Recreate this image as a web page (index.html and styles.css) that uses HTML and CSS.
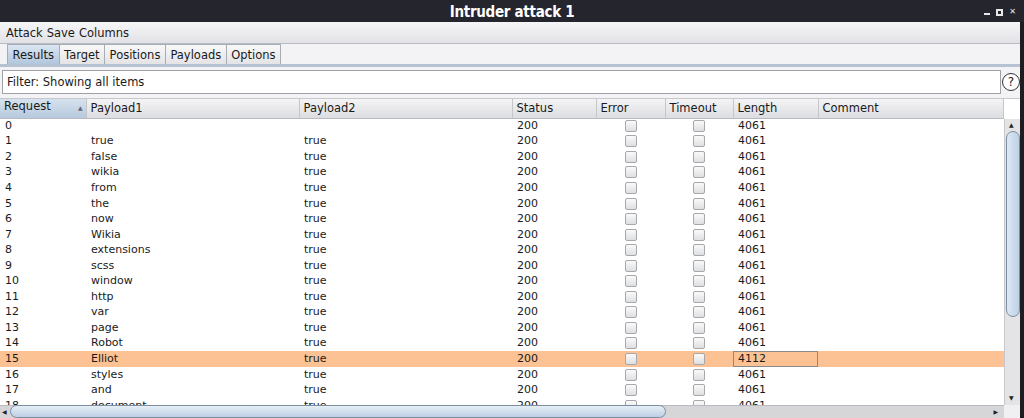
FILE: index.html
```html
<!DOCTYPE html>
<html lang="en">
<head>
    <meta charset="UTF-8">
    <title>Intruder attack 1</title>
    <link rel="stylesheet" href="styles.css">
</head>
<body>
    <div class="titlebar">
        <span class="title">Intruder attack 1</span>
        <div class="wincontrols">
            <span class="wc-min"></span>
            <span class="wc-max"></span>
            <span class="wc-close">&#x2715;</span>
        </div>
    </div>

    <div class="window">
        <div class="menubar">
            <span>Attack</span><span>Save</span><span>Columns</span>
        </div>

        <div class="tabs">
            <div class="tab active">Results</div>
            <div class="tab">Target</div>
            <div class="tab">Positions</div>
            <div class="tab">Payloads</div>
            <div class="tab">Options</div>
        </div>

        <div class="filter-row">
            <div class="filter">Filter: Showing all items</div>
            <div class="help">?</div>
        </div>

        <div class="results">
            <div class="table-area">
                <table class="grid">
                    <colgroup>
                        <col style="width:86px">
                        <col style="width:213px">
                        <col style="width:213px">
                        <col style="width:84px">
                        <col style="width:69px">
                        <col style="width:68px">
                        <col style="width:85px">
                        <col>
                    </colgroup>
                    <thead>
                        <tr>
                            <th class="sorted">Request<span class="sort">&#9650;</span></th>
                            <th>Payload1</th>
                            <th>Payload2</th>
                            <th>Status</th>
                            <th>Error</th>
                            <th>Timeout</th>
                            <th>Length</th>
                            <th>Comment</th>
                        </tr>
                    </thead>
                    <tbody id="rows"></tbody>
                </table>
                <div class="vscroll">
                    <span class="arrow up">&#9650;</span>
                    <div class="vthumb"></div>
                    <span class="arrow down">&#9660;</span>
                </div>
            </div>
            <div class="hscroll">
                <span class="arrow left">&#9664;</span>
                <div class="hthumb"></div>
                <span class="arrow right">&#9654;</span>
                <span class="corner"></span>
            </div>
        </div>
    </div>

    <script>
        var payloads = ['', 'true', 'false', 'wikia', 'from', 'the', 'now', 'Wikia', 'extensions',
            'scss', 'window', 'http', 'var', 'page', 'Robot', 'Elliot', 'styles', 'and', 'document'];
        var body = document.getElementById('rows');
        payloads.forEach(function (p, i) {
            var tr = document.createElement('tr');
            if (i === 15) tr.className = 'selected';
            var len = i === 15 ? '4112' : '4061';
            tr.innerHTML =
                '<td>' + i + '</td>' +
                '<td>' + p + '</td>' +
                '<td>' + (i === 0 ? '' : 'true') + '</td>' +
                '<td>200</td>' +
                '<td class="chk"><span class="box"></span></td>' +
                '<td class="chk"><span class="box"></span></td>' +
                '<td class="' + (i === 15 ? 'focus' : '') + '">' + len + '</td>' +
                '<td></td>';
            body.appendChild(tr);
        });
    </script>
</body>
</html>
```

FILE: styles.css
```css
* {
    box-sizing: border-box;
    margin: 0;
    padding: 0;
}

body {
    width: 1024px;
    height: 418px;
    overflow: hidden;
    background: #1d1d22;
    font-family: 'DejaVu Sans', sans-serif;
    font-size: 11px;
    color: #222;
}

.titlebar {
    height: 22px;
    background: #25252d;
    position: relative;
    display: flex;
    align-items: center;
    justify-content: center;
}

.title {
    color: #fff;
    font-family: 'DejaVu Sans Condensed', 'DejaVu Sans', sans-serif;
    font-weight: bold;
    font-size: 15px;
    letter-spacing: -0.3px;
    margin-top: 2px;
}

.wincontrols {
    position: absolute;
    right: 8px;
    top: 8px;
    display: flex;
    gap: 6px;
    align-items: flex-end;
}

.wc-min {
    width: 6px;
    height: 2px;
    background: #e8e8e8;
    margin-bottom: 1px;
}

.wc-max {
    width: 7px;
    height: 7px;
    border: 2px solid #e8e8e8;
}

.wc-close {
    color: #e8e8e8;
    font-size: 8px;
    font-weight: bold;
    line-height: 8px;
}

.window {
    width: 1020px;
    height: 396px;
    background: #eeeef0;
    display: flex;
    flex-direction: column;
}

.menubar {
    flex-shrink: 0;
    height: 22px;
    background: linear-gradient(#f6f6f8, #e2e2e6);
    border-bottom: 1px solid #b8bcc4;
    display: flex;
    align-items: center;
    gap: 4px;
    padding-left: 6px;
    font-size: 11.5px;
    color: #1a1a1a;
}

.tabs {
    flex-shrink: 0;
    height: 23px;
    display: flex;
    align-items: flex-end;
    padding-left: 7px;
    background: #f3f3f5;
    border-bottom: 3px solid #b6c2d2;
}

.tab {
    height: 20px;
    padding: 0 4.5px;
    display: flex;
    align-items: center;
    font-size: 11.5px;
    color: #1a1a1a;
    background: linear-gradient(#f8f8f8, #e4e4e6);
    border: 1px solid #a8acb4;
    border-bottom: none;
    margin-right: -1px;
}

.tab.active {
    background: linear-gradient(#dbe6f2, #b2c6dc);
}

.filter-row {
    flex-shrink: 0;
    display: flex;
    align-items: flex-start;
    padding: 3px 0 0 2px;
    background: #f3f3f5;
    height: 31px;
}

.filter {
    width: 999px;
    height: 24px;
    background: #fff;
    border: 1px solid #9ea2a8;
    display: flex;
    align-items: center;
    padding-left: 4px;
    font-size: 11.5px;
    color: #1a1a1a;
}

.help {
    width: 18px;
    height: 18px;
    margin: 3px 0 0 1px;
    border: 1px solid #333;
    border-radius: 50%;
    display: flex;
    align-items: center;
    justify-content: center;
    font-size: 12px;
    color: #222;
    background: #fff;
}

.results {
    flex: 1;
    min-height: 0;
    display: flex;
    flex-direction: column;
    background: #fff;
    border-top: 1px solid #c6c8cc;
}

.table-area {
    flex: 1;
    min-height: 0;
    display: flex;
    overflow: hidden;
}

.grid {
    width: 1004px;
    flex-shrink: 0;
    border-collapse: collapse;
    table-layout: fixed;
    align-self: flex-start;
}

.grid th {
    height: 19px;
    text-align: left;
    font-weight: normal;
    font-size: 11.5px;
    color: #1a1a1a;
    padding-left: 4px;
    background: linear-gradient(#f4f4f6, #dcdde0);
    border-right: 1px solid #c4c6ca;
    border-bottom: 1px solid #b8bcc2;
    white-space: nowrap;
}

.grid th.sorted {
    background: linear-gradient(#d6e2ef, #b7c9dd);
}

.sort {
    float: right;
    font-size: 6px;
    line-height: 18px;
    color: #667;
    margin-right: 3px;
}

.grid td {
    height: 15.55px;
    padding: 0 0 0 5px;
    font-size: 11px;
    color: #1a1a1a;
    line-height: 14px;
    white-space: nowrap;
}

.grid tr.selected td {
    background: #fcc294;
}

.grid td.focus {
    outline: 1px solid #8a8a8a;
    outline-offset: -1px;
}

.grid td.chk {
    padding: 0;
    text-align: center;
}

.box {
    display: inline-block;
    width: 12px;
    height: 12px;
    border: 1px solid #a6a8ac;
    border-radius: 2px;
    background: linear-gradient(#fafafa, #dedfe2);
    vertical-align: middle;
}

.vscroll {
    flex: 1;
    background: #e4e4e6;
    border-left: 1px solid #c8c8cc;
    position: relative;
    margin-top: 20px;
}

.vthumb {
    position: absolute;
    left: 1px;
    right: 0;
    top: 12px;
    height: 186px;
    border: 1px solid #7c8da0;
    border-radius: 8px;
    background: linear-gradient(90deg, #dde8f4, #bdd1e6);
}

.arrow {
    position: absolute;
    font-size: 6px;
    color: #222;
    left: 4px;
}

.arrow.up { top: 2px; }
.arrow.down { bottom: 4px; }

.hscroll {
    flex-shrink: 0;
    height: 13px;
    background: #d6d6d8;
    position: relative;
    border-top: 1px solid #b8bcc2;
}

.hthumb {
    position: absolute;
    left: 10px;
    width: 656px;
    top: -1px;
    height: 13px;
    border: 1px solid #7c8da0;
    border-radius: 8px;
    background: linear-gradient(#e6eef7, #bccfe3);
}

.arrow.left { left: 2px; top: 2px; }
.arrow.right { left: auto; right: 22px; top: 2px; }

.corner {
    position: absolute;
    right: 0;
    top: -1px;
    width: 16px;
    height: 13px;
    background: #f0f0f2;
}
```
